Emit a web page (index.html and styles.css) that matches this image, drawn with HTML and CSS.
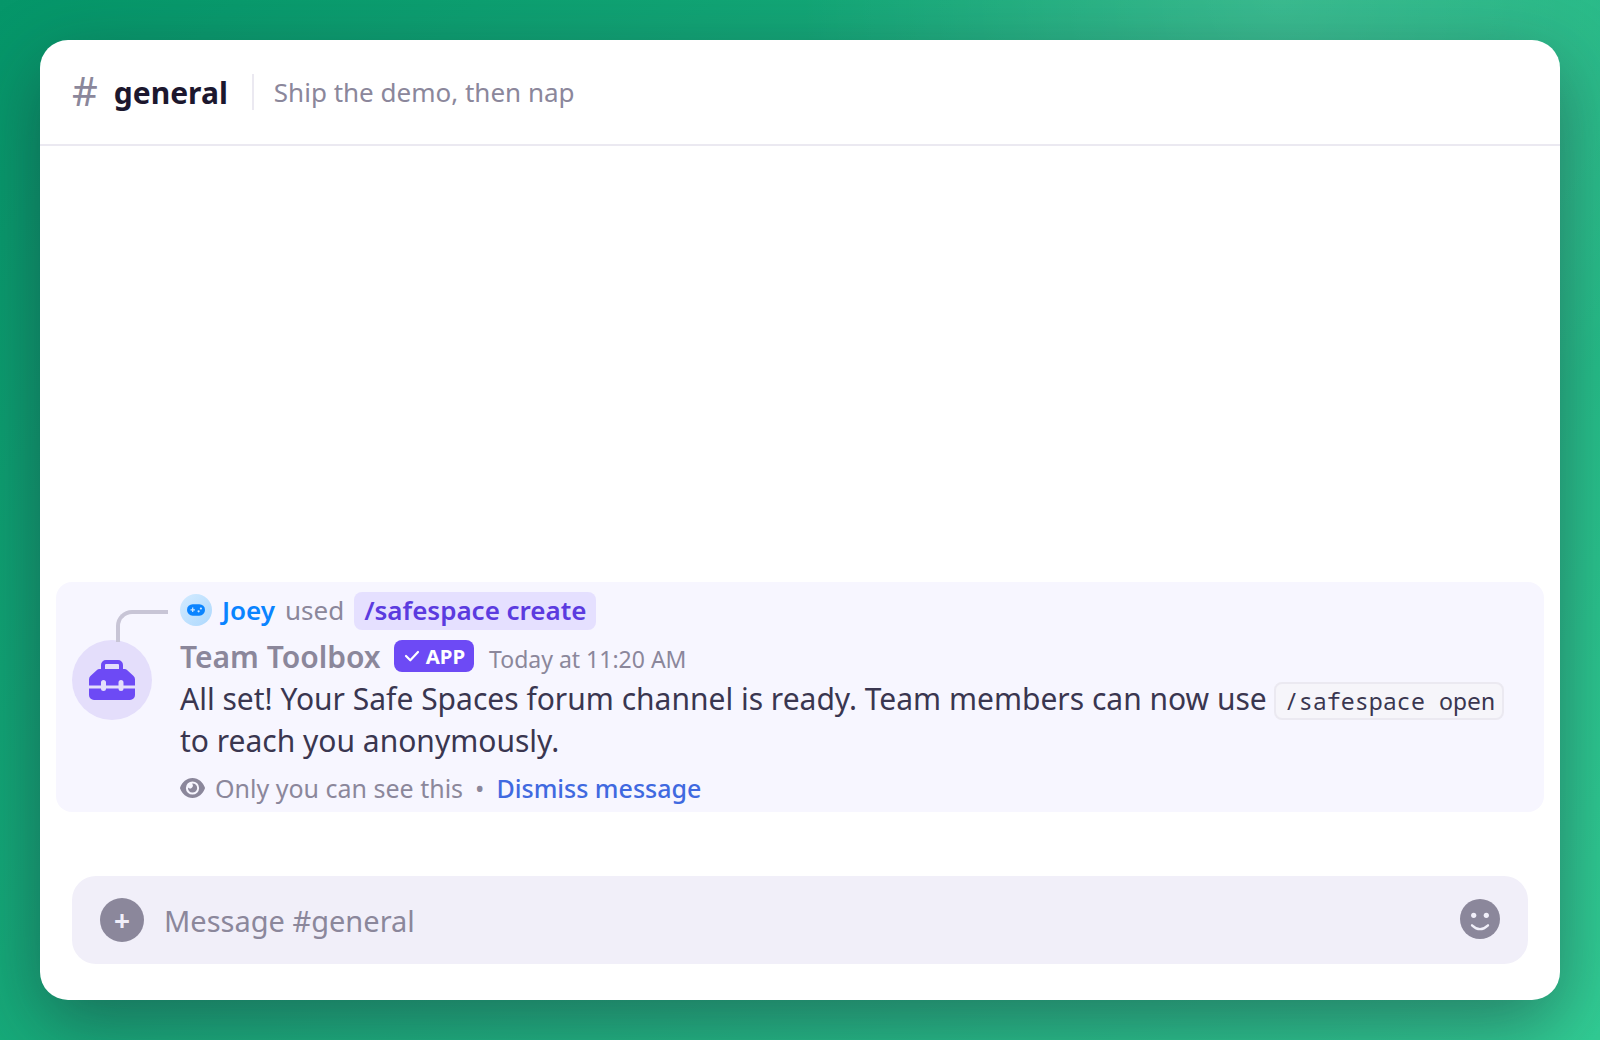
FILE: index.html
```html
<!DOCTYPE html>
<html lang="en">
<head>
  <meta charset="UTF-8">
  <title>#general</title>
  <link rel="stylesheet" href="styles.css">
</head>
<body>
  <div class="window">
    <header class="channel-header">
      <span class="hash">#</span>
      <h1>general</h1>
      <span class="topic">Ship the demo, then nap</span>
    </header>

    <main class="messages">
      <div class="message">
        <div class="gutter">
          <div class="spine"></div>
          <div class="avatar">
            <svg viewBox="0 0 46 40" width="46" height="40">
              <path fill="none" stroke="#6d4af5" stroke-width="4" d="M14 12V5a3 3 0 0 1 3-3h12a3 3 0 0 1 3 3v7"/>
              <path fill="#6d4af5" d="M10.500 9h25a4 4 0 0 1 2.800 1.200l6 5.500a5 5 0 0 1 1.700 3.500V25.600H34.500V22.500a2.500 2.500 0 0 0-5 0v3.100H17V22.500a2.500 2.500 0 0 0-5 0v3.100H0V19.200A5 5 0 0 1 1.700 15.700l6-5.500A4 4 0 0 1 10.500 9z"/>
              <path fill="#6d4af5" d="M0 28.400h12a2.500 2.500 0 0 0 5 0h12.500a2.500 2.500 0 0 0 5 0H46V35a5 5 0 0 1-5 5H5a5 5 0 0 1-5-5z"/>
            </svg>
          </div>
        </div>

        <div class="content">
          <div class="reply">
            <span class="mini-avatar">
              <svg viewBox="0 0 18 12" width="18" height="12">
                <rect width="18" height="11.500" y=".2" rx="5.700" fill="#0a84ff"/>
                <path stroke="#cfe8ff" stroke-width="1.200" d="M3.500 5.800h4.400M5.700 3.600V8"/>
                <circle cx="11.600" cy="7.300" r="1.100" fill="#cfe8ff"/>
                <circle cx="13.900" cy="4.500" r="1.100" fill="#cfe8ff"/>
              </svg>
            </span>
            <span class="reply-name">Joey</span>
            <span class="used">used</span>
            <span class="command">/safespace create</span>
          </div>

          <div class="author-row">
            <span class="author">Team Toolbox</span>
            <span class="app-tag">
              <svg viewBox="0 0 16 12" width="16" height="12">
                <path fill="none" stroke="#fff" stroke-width="2.200" stroke-linecap="round" stroke-linejoin="round" d="M2 6l4.300 4.300L14 2"/>
              </svg>
              APP
            </span>
            <span class="time">Today at 11:20 AM</span>
          </div>

          <div class="text">All set! Your Safe Spaces forum channel is ready. Team members can now use <code>/safespace open</code> to reach you anonymously.</div>

          <div class="ephemeral">
            <svg viewBox="0 0 25 20" width="25" height="20">
              <path fill="#8b879b" d="M12.500 0C6.500 0 2 4.500.2 9.200a2 2 0 0 0 0 1.500C2 15.500 6.500 20 12.500 20s10.500-4.500 12.300-9.300a2 2 0 0 0 0-1.500C23 4.500 18.500 0 12.500 0z"/>
              <circle cx="12.500" cy="10" r="6.600" fill="#f7f6ff"/>
              <path fill="#8b879b" d="M12.500 5.400a4.600 4.600 0 1 1-4.500 4 2.700 2.700 0 0 0 4.100-3.600z"/>
            </svg>
            <span>Only you can see this</span>
            <span class="dot">•</span>
            <a class="dismiss">Dismiss message</a>
          </div>
        </div>
      </div>
    </main>

    <div class="composer">
      <span class="plus">+</span>
      <span class="placeholder">Message #general</span>
      <svg class="emoji" viewBox="0 0 40 40" width="40" height="40">
        <circle cx="20" cy="20" r="20" fill="#8b879b"/>
        <circle cx="13.700" cy="16.300" r="2.600" fill="#f1eff9"/>
        <circle cx="26.300" cy="16.300" r="2.600" fill="#f1eff9"/>
        <path fill="none" stroke="#f1eff9" stroke-width="2.300" stroke-linecap="round" d="M12 26.300q8 7.600 16 0"/>
      </svg>
    </div>
  </div>
</body>
</html>
```
FILE: styles.css
```css
:root {
  --muted: #8b879b;
  --text: #3a3650;
  --heading: #1c172e;
  --purple: #6d4af5;
  --line: #ebe9f1;
}

* {
  box-sizing: border-box;
}

body {
  margin: 0;
  height: 100vh;
  padding: 40px;
  font-family: "Noto Sans", sans-serif;
  color: var(--text);
  background:
    radial-gradient(circle at 80% 0%, rgba(255, 255, 255, 0.14), transparent 480px),
    linear-gradient(135deg, #059669 0%, #31cd94 100%);
}

.window {
  height: 960px;
  display: flex;
  flex-direction: column;
  background: #fff;
  border-radius: 28px;
  box-shadow: 0 24px 72px rgba(28, 23, 46, 0.42);
  overflow: hidden;
}

/* Channel header */
.channel-header {
  height: 106px;
  flex: none;
  display: flex;
  align-items: center;
  padding: 0 32px;
  border-bottom: 2px solid var(--line);
}

.hash {
  font-size: 40px;
  line-height: 54px;
  margin-top: -2px;
  color: var(--muted);
  margin-right: 16px;
}

h1 {
  margin: 0;
  font-size: 30px;
  font-weight: 700;
  color: var(--heading);
}

.topic {
  margin-left: 24px;
  padding-left: 20px;
  border-left: 2px solid var(--line);
  font-size: 26px;
  line-height: 36px;
  color: var(--muted);
}

/* Messages */
.messages {
  flex: 1;
  display: flex;
  flex-direction: column;
  justify-content: flex-end;
  padding: 0 16px 64px;
}

.message {
  display: flex;
  height: 230px;
  padding: 10px 36px 6px 16px;
  background: #f7f6ff;
  border-radius: 16px;
}

.gutter {
  width: 108px;
  flex: none;
  padding-top: 18px;
}

.spine {
  position: relative;
  width: 52px;
  height: 32px;
  margin: 0 0 -2px 44px;
  border-top: 4px solid #c8c5d6;
  border-left: 4px solid #c8c5d6;
  border-top-left-radius: 16px;
  z-index: 1;
}

.avatar {
  width: 80px;
  height: 80px;
  display: flex;
  align-items: center;
  justify-content: center;
  border-radius: 50%;
  background: #e4defb;
}

.content {
  flex: 1;
  min-width: 0;
}

.reply {
  height: 36px;
  display: flex;
  align-items: center;
  gap: 10px;
  font-size: 26px;
  line-height: 36px;
  color: var(--muted);
}

.mini-avatar {
  width: 32px;
  height: 32px;
  display: flex;
  align-items: center;
  justify-content: center;
  border-radius: 50%;
  background: linear-gradient(135deg, #d3ebff, #add8fd);
}

.reply-name {
  font-weight: 600;
  color: #0a84ff;
}

.command {
  height: 38px;
  margin-bottom: -2px;
  padding: 0 10px;
  border-radius: 8px;
  background: #e5e0ff;
  color: #5b3bdf;
  font-weight: 600;
  letter-spacing: -0.02px;
}

.author-row {
  height: 40px;
  margin-top: 10px;
  display: flex;
  align-items: baseline;
}

.author {
  font-size: 30px;
  line-height: 38px;
  font-weight: 600;
  color: var(--muted);
}

.app-tag {
  height: 32px;
  align-self: flex-start;
  margin: 2px 0 0 13px;
  padding: 0 9px 0 10px;
  display: flex;
  align-items: center;
  gap: 6px;
  border-radius: 8px;
  background: var(--purple);
  color: #fff;
  font-size: 20.4px;
  line-height: 33px;
  font-weight: 700;
}

.time {
  margin-left: 15px;
  font-size: 23px;
  color: var(--muted);
}

.text {
  font-size: 30px;
  line-height: 42px;
}

.text code {
  margin-left: -1px;
  padding: 1px 7px 1px 9px;
  border: 2px solid var(--line);
  border-radius: 8px;
  background: #f6f5fa;
  font-family: "Noto Sans Mono", "DejaVu Sans Mono", monospace;
  font-size: 23.4px;
  line-height: 1;
}

.ephemeral {
  margin-top: 7.5px;
  display: flex;
  align-items: center;
  font-size: 25px;
  line-height: 36px;
  color: var(--muted);
}

.ephemeral svg {
  margin-right: 10px;
}

.dot {
  margin: 0 12px;
}

.dismiss {
  color: #4069e0;
  font-weight: 500;
}

/* Message box */
.composer {
  height: 88px;
  flex: none;
  margin: 0 32px 36px;
  padding: 0 28px;
  display: flex;
  align-items: center;
  border-radius: 24px;
  background: #f1eff9;
}

.plus {
  width: 44px;
  height: 44px;
  border-radius: 50%;
  background: var(--muted);
  color: #f1eff9;
  font-size: 28px;
  font-weight: 700;
  line-height: 44px;
  text-align: center;
}

.placeholder {
  flex: 1;
  margin-left: 20px;
  font-size: 29px;
  color: var(--muted);
}

.emoji {
  margin-top: -2px;
}
```
